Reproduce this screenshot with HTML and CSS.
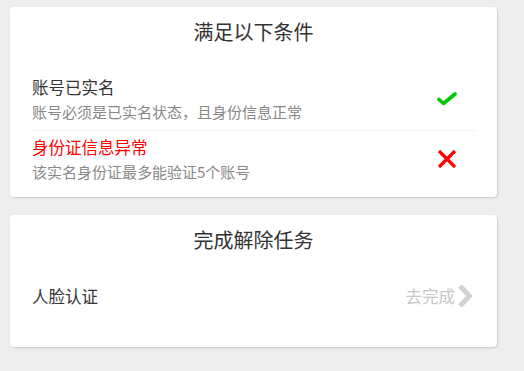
FILE: index.html
```html
<!DOCTYPE html>
<html>
	<head>
		<meta charset="utf-8">
		<title>解除条件</title>
		<link rel="stylesheet" href="styles.css">
	</head>
	<body>
		<div class="card">
			<div class="card_title">满足以下条件</div>
			<div class="cond first">
				<div class="cond_text">
					<div class="cond_name">账号已实名</div>
					<div class="cond_desc">账号必须是已实名状态，且身份信息正常</div>
				</div>
				<div class="cond_icon">
					<svg width="20" height="14" viewBox="0 0 20 14">
						<polyline points="2,7.5 6.5,11.5 18,2" fill="none" stroke="#00c800" stroke-width="3.6" stroke-linecap="round" stroke-linejoin="round"/>
					</svg>
				</div>
			</div>
			<div class="cond last">
				<div class="cond_text">
					<div class="cond_name error">身份证信息异常</div>
					<div class="cond_desc">该实名身份证最多能验证5个账号</div>
				</div>
				<div class="cond_icon">
					<svg width="20" height="20" viewBox="0 0 20 20">
						<line x1="2" y1="2" x2="18" y2="18" stroke="#ff0000" stroke-width="3.2"/>
						<line x1="18" y1="2" x2="2" y2="18" stroke="#ff0000" stroke-width="3.2"/>
					</svg>
				</div>
			</div>
		</div>

		<div class="card task_card">
			<div class="card_title">完成解除任务</div>
			<div class="task">
				<div class="task_name">人脸认证</div>
				<div class="task_go">
					去完成
					<svg width="16" height="26" viewBox="0 0 16 26">
						<polyline points="3,3 12.5,13 3,23" fill="none" stroke="#d2d2d2" stroke-width="5"/>
					</svg>
				</div>
			</div>
		</div>
	</body>
</html>
```
FILE: styles.css
```css
body {margin:0;padding:7px 27px 0 10px;background:#eeeeee;font-family:"Noto Sans CJK SC","Noto Sans",sans-serif;color:#333}
.card {background:#fff;border-radius:4px;box-shadow:1px 1px 2px rgba(0,0,0,0.15);padding:0 22px 7px 22px;margin-bottom:18px}
.card_title {height:50px;line-height:50px;text-align:center;font-size:20px;color:#333}
.cond {display:flex;align-items:center;padding:4px 0 7px 0}
.cond.first {padding-top:18px;border-bottom:1px solid #f2f2f2}
.cond_text {flex:1}
.cond_name {font-size:16.5px;line-height:24px;color:#333}
.cond_name.error {color:#ff0000}
.cond_desc {font-size:15px;line-height:22px;margin-top:2px;color:#888}
.cond_icon {width:24px;margin-right:16px;display:flex;justify-content:center;align-items:center}
.task_card {padding-bottom:38px}
.task {display:flex;align-items:center;padding-top:18px}
.task_name {flex:1;font-size:16.5px;line-height:24px;color:#333}
.task_go {display:flex;align-items:center;font-size:16.5px;color:#c8c8c8;margin-right:2px}
.task_go svg {margin-left:2px}
```
